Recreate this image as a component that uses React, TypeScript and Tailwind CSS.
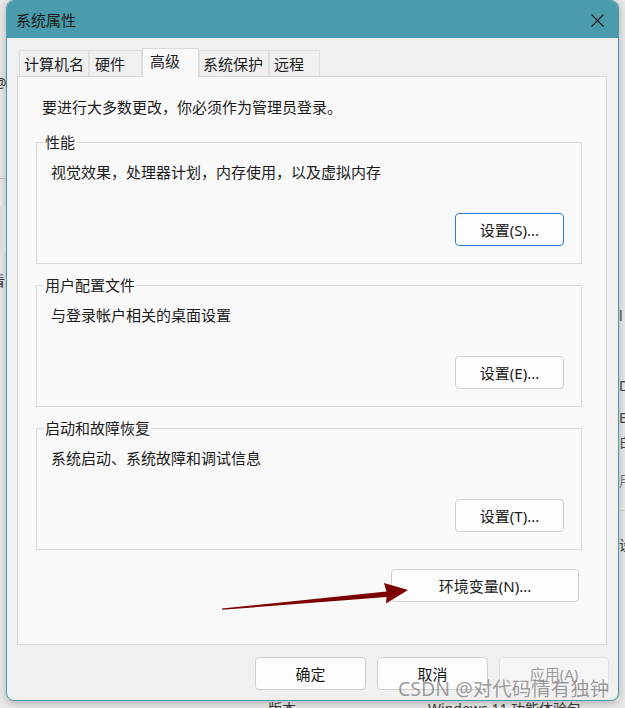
import React from "react";

const font = "font-['Noto_Sans','Noto_Sans_CJK_SC',sans-serif]";

function Btn({ label, focused, disabled, w }: { label: string; focused?: boolean; disabled?: boolean; w: string }) {
  const base = "h-[33px] rounded-[4px] flex items-center justify-center text-[15px] leading-[20px] shrink-0 whitespace-nowrap";
  const cls = disabled
    ? "border border-[#e3e3e3] bg-[#f5f5f5] text-[#9d9d9d]"
    : focused
    ? "border border-[#2a7fd0] bg-[#fdfdfd] text-[#1b1b1b]"
    : "border border-[#d0d0d0] bg-[#fdfdfd] text-[#1b1b1b]";
  return <div className={`${base} ${cls} ${w}`}>{label}</div>;
}

function Group({ title, text, btn, focused }: { title: string; text: string; btn: string; focused?: boolean }) {
  return (
    <fieldset className="ml-[18px] mr-[24px] border border-[#dadada] p-0">
      <legend className="ml-[7px] px-[1px] text-[15px] leading-[20px] text-[#1b1b1b]">{title}</legend>
      <div className="pl-[14px] pr-[17px] pt-[10px] pb-[17px] flex flex-col">
        <div className="text-[15px] leading-[20px] text-[#1b1b1b] whitespace-nowrap">{text}</div>
        <div className="mt-[31px] flex justify-end">
          <Btn label={btn} focused={focused} w="w-[109px]" />
        </div>
      </div>
    </fieldset>
  );
}

function Tab({ label, selected, w, pl }: { label: string; selected?: boolean; w: string; pl: string }) {
  return selected ? (
    <div className={`relative z-10 -mb-px h-[29px] ${w} ${pl} border border-b-0 border-[#d9d9d9] bg-[#f9f9f9] flex items-start pt-[2px] text-[15px] leading-[20px] text-[#1b1b1b] whitespace-nowrap`}>
      {label}
    </div>
  ) : (
    <div className={`h-[26px] ${w} ${pl} border border-b-0 border-[#e0e0e0] bg-[#f0f0f0] flex items-center text-[15px] leading-[20px] text-[#1b1b1b] whitespace-nowrap`}>
      {label}
    </div>
  );
}

export default function App() {
  return (
    <div className={`relative w-[625px] h-[708px] overflow-hidden bg-[#e9e9e9] ${font}`}>
      {/* background desktop fragments */}
      <div className="absolute left-[-6px] top-[72px] text-[14px] text-[#333]">@</div>
      <div className="absolute left-0 top-[178px] w-[6px] h-px bg-[#b5b5b5]" />
      <div className="absolute left-0 top-[207px] w-[6px] h-[45px] bg-[#dcdcdc]" />
      <div className="absolute left-[-9px] top-[270px] text-[14px] text-[#333]">看</div>
      <div className="absolute left-[619px] top-[305px] text-[14px] text-[#444]">l</div>
      <div className="absolute left-[619px] top-[375px] text-[14px] text-[#444]">D</div>
      <div className="absolute left-[619px] top-[407px] text-[14px] text-[#444]">E</div>
      <div className="absolute left-[619px] top-[431px] text-[14px] text-[#444]">白</div>
      <div className="absolute left-[619px] top-[470px] text-[14px] text-[#777]">用</div>
      <div className="absolute left-[619px] top-[510px] w-[6px] h-px bg-[#c8c8c8]" />
      <div className="absolute left-[619px] top-[534px] text-[14px] text-[#333]">设</div>
      <div className="absolute left-[268px] top-[698px] text-[14px] text-[#333]">版本</div>
      <div className="absolute left-[428px] top-[698px] text-[14px] text-[#333] whitespace-nowrap">Windows 11 功能体验包</div>

      <div className="flex pl-[6px]">
        <div className="w-[613px] h-[701px] rounded-[8px] border border-[#4a9bab] bg-[#f0f0f0] overflow-hidden flex flex-col shadow-[0_2px_8px_rgba(0,0,0,0.25)]">
          {/* title bar */}
          <div className="h-[37px] bg-[#4a9bab] flex items-center justify-between pl-[9px] pr-[14px] shrink-0">
            <div className="text-[15px] leading-[20px] text-[#1a1a1a] pt-[1px]">系统属性</div>
            <svg width="13" height="13" viewBox="0 0 13 13" className="mt-[1px]">
              <path d="M0.5 0.5 L12.5 12.5 M12.5 0.5 L0.5 12.5" stroke="#1a1a1a" strokeWidth="1.1" fill="none" />
            </svg>
          </div>
          {/* body */}
          <div className="flex-1 flex flex-col pl-[10px] pr-[11px] pt-[10px]">
            <div className="flex items-end pl-[2px] h-[28px]">
              <Tab label="计算机名" w="w-[70px]" pl="pl-[4px]" />
              <Tab label="硬件" w="w-[53px]" pl="pl-[5px]" />
              <Tab label="高级" selected w="w-[57px]" pl="pl-[7px]" />
              <Tab label="系统保护" w="w-[70px]" pl="pl-[3px]" />
              <Tab label="远程" w="w-[51px]" pl="pl-[4px]" />
            </div>
            <div className="relative w-[590px] h-[569px] border border-[#d9d9d9] bg-[#f9f9f9] flex flex-col">
              <div className="pl-[24px] pt-[20px] text-[15px] leading-[20px] text-[#1b1b1b]">要进行大多数更改，你必须作为管理员登录。</div>
              <div className="mt-[15px]">
                <Group title="性能" text="视觉效果，处理器计划，内存使用，以及虚拟内存" btn="设置(S)..." focused />
              </div>
              <div className="mt-[11px]">
                <Group title="用户配置文件" text="与登录帐户相关的桌面设置" btn="设置(E)..." />
              </div>
              <div className="mt-[11px]">
                <Group title="启动和故障恢复" text="系统启动、系统故障和调试信息" btn="设置(T)..." />
              </div>
              <div className="mt-[19px] mr-[27px] flex justify-end">
                <Btn label="环境变量(N)..." w="w-[188px]" />
              </div>
              <svg className="absolute left-[203px] top-[503px]" width="200" height="35" viewBox="0 0 200 35">
                <polygon points="1,28.5 165.5,11.5 163,3 187,10 165,23.5 165.5,17 1,29.8" fill="#7d0000" />
              </svg>
            </div>
            <div className="mt-[12px] -mr-[2px] flex justify-end gap-[11px]">
              <Btn label="确定" w="w-[111px]" />
              <Btn label="取消" w="w-[111px]" />
              <Btn label="应用(A)" disabled w="w-[110px]" />
            </div>
          </div>
        </div>
      </div>

      <div className="absolute left-[398px] top-[676px] text-[19.5px] leading-[26px] text-[rgba(120,120,120,0.72)] whitespace-nowrap">
        CSDN @对代码情有独钟
      </div>
    </div>
  );
}
